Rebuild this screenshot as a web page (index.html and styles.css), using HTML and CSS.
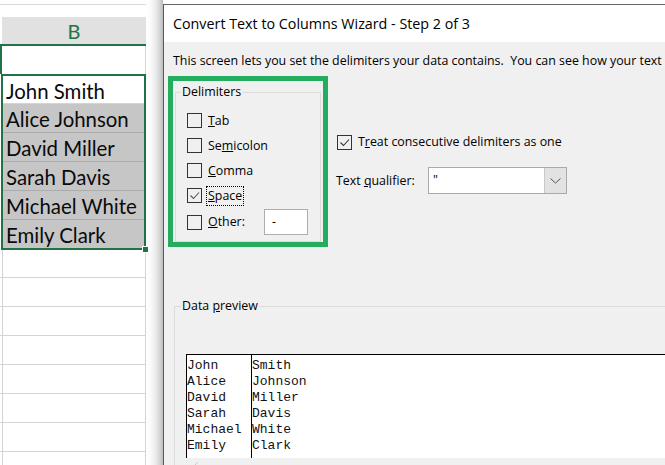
FILE: index.html
```html
<!DOCTYPE html>
<html lang="en">
<head>
<meta charset="utf-8">
<title>Convert Text to Columns Wizard</title>
<link rel="stylesheet" href="styles.css">
</head>
<body>
<div class="screen">
  <div class="sheet">
    <div class="col">
      <div class="corner"></div>
      <div class="colhead-wrap"><div class="colhead">B</div></div>
      <div class="row1"><div class="row1-cell"></div></div>
      <div class="selection">
        <div class="scell active">John Smith</div>
        <div class="scell">Alice Johnson</div>
        <div class="scell">David Miller</div>
        <div class="scell">Sarah Davis</div>
        <div class="scell">Michael White</div>
        <div class="scell last">Emily Clark</div>
        <span class="fill-handle"></span>
      </div>
      <div class="grid">
        <div class="grow first"></div>
        <div class="grow"></div>
        <div class="grow"></div>
        <div class="grow"></div>
        <div class="grow"></div>
        <div class="grow"></div>
        <div class="grow"></div>
        <div class="grow"></div>
      </div>
    </div>
    <div class="shadow"></div>
  </div>

  <div class="dialog">
    <div class="titlebar">Convert Text to Columns Wizard - Step 2 of 3</div>
    <div class="dbody">
      <p class="desc">This screen lets you set the delimiters your data contains.  You can see how your text</p>
      <div class="main">
        <div class="highlight">
          <fieldset class="group delims">
            <legend>Delimiters</legend>
            <div class="opt"><span class="cb"></span><span class="lbl"><u>T</u>ab</span></div>
            <div class="opt"><span class="cb"></span><span class="lbl">Se<u>m</u>icolon</span></div>
            <div class="opt"><span class="cb"></span><span class="lbl"><u>C</u>omma</span></div>
            <div class="opt"><span class="cb"><svg class="tick" viewBox="0 0 13 13" width="13" height="13"><path d="M2.5 6.5 L5.5 9.5 L11 3.5" fill="none" stroke="#555" stroke-width="1.1"/></svg></span><span class="lbl focus"><u>S</u>pace</span></div>
            <div class="opt other"><span class="cb"></span><span class="lbl"><u>O</u>ther:</span><span class="textbox">-</span></div>
          </fieldset>
        </div>
        <div class="options">
          <div class="opt treat"><span class="cb"><svg class="tick" viewBox="0 0 13 13" width="13" height="13"><path d="M2.5 6.5 L5.5 9.5 L11 3.5" fill="none" stroke="#333" stroke-width="1.1"/></svg></span><span class="lbl">T<u>r</u>eat consecutive delimiters as one</span></div>
          <div class="qual">
            <span class="qlabel">Text <u>q</u>ualifier:</span>
            <div class="combo">
              <span class="cval">"</span>
              <span class="cbtn"><svg viewBox="0 0 11 6" width="11" height="6"><path d="M0.5 0.5 L5.5 5 L10.5 0.5" fill="none" stroke="#555" stroke-width="1"/></svg></span>
            </div>
          </div>
        </div>
      </div>
      <fieldset class="group preview-group">
        <legend>Data <u>p</u>review</legend>
        <div class="preview">
          <div class="pcol c1">
            <div>John</div><div>Alice</div><div>David</div><div>Sarah</div><div>Michael</div><div>Emily</div>
          </div>
          <div class="pcol c2">
            <div>Smith</div><div>Johnson</div><div>Miller</div><div>Davis</div><div>White</div><div>Clark</div>
          </div>
        </div>
        <div class="hscroll"><svg viewBox="0 0 5 8" width="5" height="8"><path d="M4.5 0.5 L1 4 L4.5 7.5" fill="none" stroke="#c8c8c8" stroke-width="1"/></svg></div>
      </fieldset>
    </div>
  </div>
</div>
</body>
</html>
```
FILE: styles.css
```css
* { box-sizing: border-box; }
html, body { margin: 0; padding: 0; }
body {
  width: 665px;
  height: 465px;
  overflow: hidden;
  background: #fff;
  font-family: "Open Sans", "Noto Sans", sans-serif;
  color: #000;
}
.screen {
  display: flex;
  width: 665px;
  height: 465px;
  overflow: hidden;
}

/* ---------- spreadsheet ---------- */
.sheet {
  display: flex;
  flex: none;
  width: 163px;
  height: 465px;
}
.col {
  width: 146px;
  flex: none;
  font-family: "Lato", "Open Sans", sans-serif;
  font-size: 20.4px;
}
.corner {
  margin-top: 4px;
  height: 13px;
  border-top: 1px solid #dadada;
}
.colhead-wrap {
  padding-left: 2px;
  border-bottom: 2px solid #217346;
}
.colhead {
  height: 27px;
  background: #e1e1e1;
  color: #217346;
  display: flex;
  align-items: center;
  justify-content: center;
  font-size: 20px;
  padding-top: 1px;
}
.row1 {
  height: 28px;
  border-left: 2px solid #217346;
  background: linear-gradient(to right, transparent 143px, #d4d4d4 143px, #d4d4d4 144px, transparent 144px);
}
.selection {
  position: relative;
  margin-left: 1px;
  width: 145px;
  border: 2px solid #217346;
}
.scell {
  height: 29px;
  padding: 2px 0 0 3px;
  display: flex;
  align-items: center;
  background: #c6c6c6;
  border-bottom: 1px solid #acacac;
  white-space: nowrap;
  line-height: 24px;
  color: #0a0a0a;
}
.scell.active {
  height: 28px;
  background: #fff;
  border-bottom: 1px solid #d4d4d4;
}
.scell.last {
  height: 28px;
  border-bottom: none;
}
.fill-handle {
  position: absolute;
  right: -5px;
  bottom: -5px;
  width: 7px;
  height: 7px;
  background: #217346;
  border: 1px solid #fff;
}
.grid {
  background: linear-gradient(to right, transparent 2px, #d4d4d4 2px, #d4d4d4 3px, transparent 3px, transparent 145px, #d4d4d4 145px);
}
.grow {
  height: 29px;
  border-bottom: 1px solid #d4d4d4;
}
.grow.first { height: 28px; }
.shadow {
  width: 17px;
  flex: none;
  background: linear-gradient(to right, #ffffff 0%, #fbfbfb 25%, #ececec 55%, #d6d6d6 80%, #bcbcbc 100%);
}

/* ---------- dialog ---------- */
.dialog {
  flex: 1;
  min-width: 0;
  margin-top: 4px;
  border-top: 1px solid #646464;
  border-left: 1px solid #575757;
  background: #f0f0f0;
  overflow: hidden;
  font-size: 12.4px;
  line-height: 16px;
}
.titlebar {
  height: 37px;
  background: #fff;
  display: flex;
  align-items: center;
  padding-left: 9px;
  font-size: 14.3px;
  white-space: nowrap;
}
.dbody {
  width: 620px;
}
.desc {
  margin: 11px 0 0 0;
  padding-left: 9px;
  white-space: pre;
  height: 16px;
}
.main {
  display: flex;
  margin-top: 7px;
}
.highlight {
  margin-left: 4px;
  width: 160px;
  height: 171px;
  border: 5px solid #25ad5f;
  flex: none;
}
.group {
  margin: 0;
  border: 1px solid #dcdcdc;
  min-width: 0;
}
.group legend {
  padding: 0 1px;
  line-height: 16px;
}
.delims {
  margin: 3px 2px 0 2px;
  padding: 8px 12px 5px 5px;
}
.opt {
  display: flex;
  align-items: center;
  height: 25px;
  margin-left: 6px;
}
.opt.other { height: 28px; }
.cb {
  width: 15px;
  height: 15px;
  flex: none;
  border: 1px solid #333;
  background: #fff;
  display: flex;
  align-items: center;
  justify-content: center;
}
.delims .cb { background: transparent; }
.tick { display: block; }
.lbl {
  margin-left: 4px;
  padding: 1px 1px;
  border: 1px dotted transparent;
  white-space: nowrap;
}
.lbl.focus { border-color: #000; }
.textbox {
  margin-left: auto;
  width: 44px;
  height: 26px;
  background: #fff;
  border: 1px solid #adadad;
  padding: 4px 0 0 7px;
}
.options {
  margin-left: 8px;
  padding-top: 58px;
}
.opt.treat {
  height: 16px;
  margin-left: 1px;
}
.treat .cb { background: transparent; }
.qual {
  display: flex;
  align-items: center;
  margin-top: 17px;
}
.qlabel {
  width: 92px;
  flex: none;
  white-space: nowrap;
}
.combo {
  display: flex;
  width: 139px;
  height: 27px;
  background: #fff;
  border: 1px solid #a9a9a9;
}
.cval {
  flex: 1;
  padding: 4px 0 0 4px;
}
.cbtn {
  width: 22px;
  flex: none;
  background: #e2e2e2;
  border-left: 1px solid #c9c9c9;
  display: flex;
  align-items: center;
  justify-content: center;
}
.cbtn svg { display: block; }

.preview-group {
  margin: 51px 0 0 10px;
  width: 600px;
  height: 200px;
  padding: 0 0 0 6px;
}
.preview {
  margin: 40px 0 0 5px;
  display: flex;
  height: 104px;
  background: #fff;
  border-top: 1px solid #000;
  border-left: 1px solid #000;
  font-family: "Liberation Mono", "Courier New", monospace;
  font-size: 13px;
  line-height: 16px;
  color: #111;
}
.pcol {
  padding-top: 3px;
}
.pcol.c1 {
  width: 65px;
  border-right: 1px solid #000;
}
.hscroll {
  margin-left: 5px;
  height: 17px;
  padding: 4px 0 0 7px;
}
.hscroll svg { display: block; }
```
